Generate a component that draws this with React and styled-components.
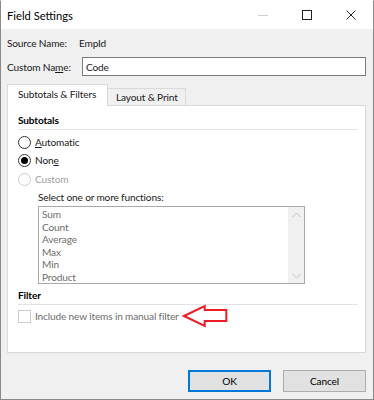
import React from "react";
import styled, { createGlobalStyle } from "styled-components";

const Global = createGlobalStyle`
  html, body { margin: 0; padding: 0; background: #fff; }
  body { font-family: Lato, "Noto Sans", sans-serif; font-size: 10.1px; letter-spacing: -0.15px; color: #1a1a1a; white-space: nowrap; }
  * { box-sizing: border-box; }
`;

const Window = styled.div`
  width: 374px;
  height: 400px;
  border: 1px solid #8a8a8a;
  border-top-color: #ffffff;
  background: #f0f0f0;
  display: flex;
  flex-direction: column;
`;

const TitleBar = styled.div`
  height: 28px;
  background: #ffffff;
  display: flex;
  align-items: center;
  padding-left: 6px;
  font-size: 11.2px;
  letter-spacing: 0;
  color: #000;
`;

const Title = styled.div`
  flex: 1;
`;

const Ctrl = styled.div`
  width: 44px;
  height: 28px;
  display: flex;
  align-items: center;
  justify-content: center;
`;

const Body = styled.div`
  flex: 1;
  display: flex;
  flex-direction: column;
  padding: 0 7px 0 6px;
`;

const Row = styled.div`
  display: flex;
  align-items: center;
  margin-top: ${(p) => p.$mt}px;
  height: ${(p) => p.$h}px;
`;

const Label = styled.span`
  width: ${(p) => p.$w || "auto"};
  flex-shrink: 0;
`;

const Input = styled.div`
  flex: 1;
  height: 19px;
  border: 1px solid #7a7a7a;
  background: #fff;
  display: flex;
  align-items: center;
  padding-left: 3px;
`;

const Tabs = styled.div`
  display: flex;
  align-items: flex-end;
  margin-top: 8px;
  position: relative;
  z-index: 1;
  margin-bottom: -1px;
`;

const Tab = styled.div`
  height: ${(p) => (p.$active ? 22 : 18)}px;
  padding-left: ${(p) => (p.$active ? 10 : 8)}px;
  width: ${(p) => p.$w}px;
  background: ${(p) => (p.$active ? "#fff" : "#f0f0f0")};
  border: 1px solid #d9d9d9;
  border-bottom: ${(p) => (p.$active ? "none" : "1px solid #d9d9d9")};
  border-left: ${(p) => (p.$first ? "1px solid #d9d9d9" : "none")};
  display: flex;
  align-items: center;
  padding-bottom: ${(p) => (p.$active ? 3 : 0)}px;
`;

const Panel = styled.div`
  height: 248px;
  background: #fff;
  border: 1px solid #d9d9d9;
  padding: 0 7px 0 10px;
  display: flex;
  flex-direction: column;
`;

const Heading = styled.div`
  font-weight: bold;
  margin-top: ${(p) => p.$mt}px;
  height: 14px;
  line-height: 14px;
  color: #000;
`;

const Separator = styled.div`
  height: 1px;
  background: #e3e3e3;
  margin-top: 2px;
`;

const OptionRow = styled.div`
  display: flex;
  align-items: center;
  height: 14px;
  margin-top: ${(p) => p.$mt}px;
  color: ${(p) => (p.$disabled ? "#a0a0a0" : "#1a1a1a")};
`;

const Radio = styled.span`
  width: 13px;
  height: 13px;
  border-radius: 50%;
  border: 1px solid ${(p) => (p.$disabled ? "#cccccc" : "#333333")};
  margin-right: 4px;
  display: flex;
  align-items: center;
  justify-content: center;
  flex-shrink: 0;
  &::after {
    content: "";
    display: ${(p) => (p.$checked ? "block" : "none")};
    width: 7px;
    height: 7px;
    border-radius: 50%;
    background: #000;
  }
`;

const Check = styled.span`
  width: 13px;
  height: 13px;
  border: 1px solid #cccccc;
  margin-right: 4px;
  flex-shrink: 0;
`;

const SubLabel = styled.div`
  margin-left: 20px;
  margin-top: 4px;
  height: 14px;
  line-height: 14px;
`;

const ListBox = styled.div`
  margin-left: 20px;
  margin-top: 2px;
  width: 267px;
  height: 78px;
  flex-shrink: 0;
  border: 1px solid #a9a9a9;
  display: flex;
`;

const Items = styled.div`
  flex: 1;
  padding: 1px 0 0 3px;
  color: #6d6d6d;
`;

const Item = styled.div`
  height: 12.6px;
  line-height: 12px;
`;

const Scroll = styled.div`
  width: 16px;
  background: #f0f0f0;
  display: flex;
  flex-direction: column;
  justify-content: space-between;
  align-items: center;
  padding: 5px 0 4px;
`;

const Footer = styled.div`
  display: flex;
  justify-content: flex-end;
  gap: 12px;
  margin-top: 17px;
`;

const Button = styled.div`
  width: 83px;
  height: 22px;
  background: #e1e1e1;
  border: ${(p) => (p.$primary ? "2px solid #0078d7" : "1px solid #adadad")};
  display: flex;
  align-items: center;
  justify-content: center;
  color: #000;
`;

const DisabledText = styled.span`
  color: #6d6d6d;
`;

const Arrow = () => (
  <svg width="47" height="25" viewBox="0 0 47 25" style={{ marginLeft: 3, flexShrink: 0 }}>
    <polygon
      points="2,12 22.7,2 22.7,6 44.3,6 44.3,17 22.7,17 22.7,22"
      fill="none"
      stroke="#ee1c25"
      strokeWidth="2"
      strokeLinejoin="miter"
    />
  </svg>
);

const Chevron = ({ up }) => (
  <svg width="9" height="6" viewBox="0 0 9 6">
    <polyline
      points={up ? "0.5,5 4.5,1 8.5,5" : "0.5,1 4.5,5 8.5,1"}
      fill="none"
      stroke="#c2c2c2"
      strokeWidth="1"
    />
  </svg>
);

export default function App() {
  return (
    <>
      <Global />
      <Window>
        <TitleBar>
          <Title>Field Settings</Title>
          <Ctrl>
            <svg width="10" height="10" viewBox="0 0 10 10">
              <line x1="0" y1="5.5" x2="10" y2="5.5" stroke="#cfcfcf" strokeWidth="1" />
            </svg>
          </Ctrl>
          <Ctrl>
            <svg width="10" height="10" viewBox="0 0 10 10">
              <rect x="0.5" y="0.5" width="9" height="9" fill="none" stroke="#222" strokeWidth="1" />
            </svg>
          </Ctrl>
          <Ctrl>
            <svg width="10" height="10" viewBox="0 0 10 10">
              <path d="M0.5 0.5 L9.5 9.5 M9.5 0.5 L0.5 9.5" stroke="#222" strokeWidth="1" />
            </svg>
          </Ctrl>
        </TitleBar>
        <Body>
          <Row $mt={6} $h={16}>
            <Label $w="72px">Source Name:</Label>
            <span>EmpId</span>
          </Row>
          <Row $mt={6} $h={19}>
            <Label $w="75px">
              Custom Na<u>m</u>e:
            </Label>
            <Input>Code</Input>
          </Row>
          <Tabs>
            <Tab $active $first $w={101}>Subtotals &amp; Filters</Tab>
            <Tab $w={78}>Layout &amp; Print</Tab>
          </Tabs>
          <Panel>
            <Heading $mt={7}>Subtotals</Heading>
            <Separator />
            <OptionRow $mt={5}>
              <Radio />
              <span>
                <u>A</u>utomatic
              </span>
            </OptionRow>
            <OptionRow $mt={4}>
              <Radio $checked />
              <span>
                Non<u>e</u>
              </span>
            </OptionRow>
            <OptionRow $mt={5} $disabled>
              <Radio $disabled />
              <span>Custom</span>
            </OptionRow>
            <SubLabel>Select one or more functions:</SubLabel>
            <ListBox>
              <Items>
                {["Sum", "Count", "Average", "Max", "Min", "Product"].map((t) => (
                  <Item key={t}>{t}</Item>
                ))}
              </Items>
              <Scroll>
                <Chevron up />
                <Chevron />
              </Scroll>
            </ListBox>
            <Heading $mt={4}>Filter</Heading>
            <Separator />
            <OptionRow $mt={4}>
              <Check />
              <DisabledText>Include new items in manual filter</DisabledText>
              <Arrow />
            </OptionRow>
          </Panel>
          <Footer>
            <Button $primary>OK</Button>
            <Button>Cancel</Button>
          </Footer>
        </Body>
      </Window>
    </>
  );
}
